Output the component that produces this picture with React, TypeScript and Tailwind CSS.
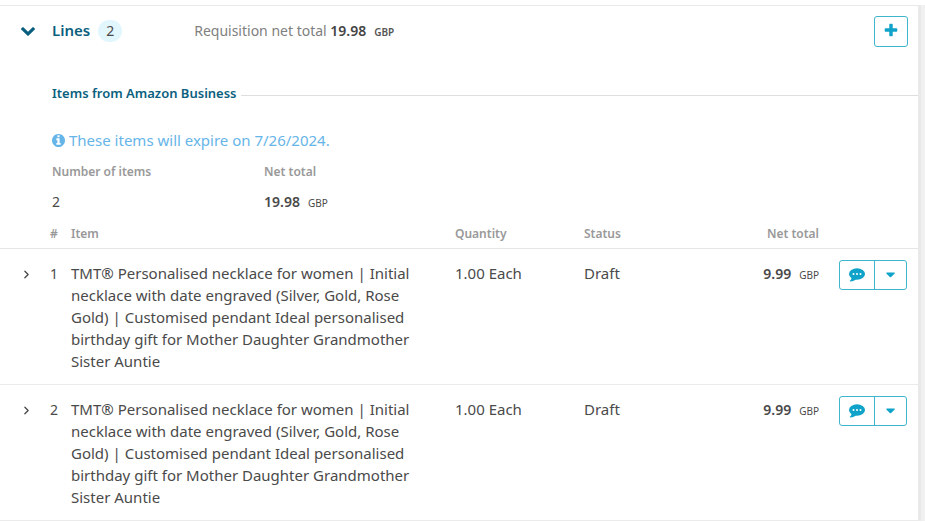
import { useState } from 'react';
import { ChevronRight } from 'lucide-react';

interface LineItem {
    id: number;
    name: string;
    quantity: string;
    status: string;
    netTotal: string;
}

const itemName =
    'TMT® Personalised necklace for women | Initial necklace with date engraved (Silver, Gold, Rose Gold) | Customised pendant Ideal personalised birthday gift for Mother Daughter Grandmother Sister Auntie';

const lines: LineItem[] = [
    { id: 1, name: itemName, quantity: '1.00 Each', status: 'Draft', netTotal: '9.99' },
    { id: 2, name: itemName, quantity: '1.00 Each', status: 'Draft', netTotal: '9.99' },
];

function ChevronDownIcon() {
    return (
        <svg width="14" height="9" viewBox="90 533 1612 1035" fill="currentColor" aria-hidden="true">
            <path d="M1683 808l-742 741q-19 19-45 19t-45-19l-742-741q-19-19-19-45.5t19-45.5l166-165q19-19 45-19t45 19l531 531 531-531q19-19 45-19t45 19l166 165q19 19 19 45.5t-19 45.5z" />
        </svg>
    );
}

function PlusIcon() {
    return (
        <svg width="16" height="16" viewBox="0 0 1792 1792" fill="currentColor" aria-hidden="true">
            <path d="M1600 800v192q0 40-28 68t-68 28h-416v416q0 40-28 68t-68 28h-192q-40 0-68-28t-28-68v-416h-416q-40 0-68-28t-28-68v-192q0-40 28-68t68-28h416v-416q0-40 28-68t68-28h192q40 0 68 28t28 68v416h416q40 0 68 28t28 68z" />
        </svg>
    );
}

function InfoIcon() {
    return (
        <svg width="13" height="13" viewBox="128 128 1536 1536" fill="currentColor" aria-hidden="true">
            <path d="M1152 1376v-160q0-14-9-23t-23-9h-96v-512q0-14-9-23t-23-9h-320q-14 0-23 9t-9 23v160q0 14 9 23t23 9h96v320h-96q-14 0-23 9t-9 23v160q0 14 9 23t23 9h448q14 0 23-9t9-23zm-128-896v-160q0-14-9-23t-23-9h-192q-14 0-23 9t-9 23v160q0 14 9 23t23 9h192q14 0 23-9t9-23zm640 416q0 209-103 385.5t-279.5 279.5-385.5 103-385.5-103-279.5-279.5-103-385.5 103-385.5 279.5-279.5 385.5-103 385.5 103 279.5 279.5 103 385.5z" />
        </svg>
    );
}

function CommentIcon() {
    return (
        <svg width="16" height="14" viewBox="0 0 16 14" fill="currentColor" aria-hidden="true">
            <ellipse cx="8" cy="6" rx="8" ry="5.8" />
            <path d="M2.6 9c0 1.800-.6 2.800-1.500 3.600-.4.4-.1.900.4.800 2.400-.2 4.300-1 5.900-2.400z" />
            <circle cx="4.5" cy="6" r="1" fill="white" />
            <circle cx="8" cy="6" r="1" fill="white" />
            <circle cx="11.5" cy="6" r="1" fill="white" />
        </svg>
    );
}

function CaretDownIcon() {
    return (
        <svg width="15" height="15" viewBox="0 0 1792 1792" fill="currentColor" aria-hidden="true">
            <path d="M1408 600q0 26-19 45l-448 448q-19 19-45 19t-45-19l-448-448q-19-19-19-45t19-45 45-19h896q26 0 45 19t19 45z" />
        </svg>
    );
}

function LineRow({ line }: { line: LineItem }) {
    return (
        <tr className="border-b border-[#ebebeb] align-top text-[15px]">
            <td className="pt-[14px] pb-[11px] pl-5">
                <button type="button" aria-label={`Expand line ${line.id}`} className="flex h-[22px] items-center text-[#4a4a4a]">
                    <ChevronRight size={13} strokeWidth={2.5} />
                </button>
            </td>
            <td className="pt-[14px] pb-[11px] text-[14px]">{line.id}</td>
            <td className="pt-[13px] pb-3">
                <div className="max-w-[345px]">{line.name}</div>
            </td>
            <td className="pt-[13px] pb-3">{line.quantity}</td>
            <td className="pt-[13px] pb-3">{line.status}</td>
            <td className="pt-[14px] pb-[11px] text-right text-[14px]">
                <span className="font-semibold">{line.netTotal}</span>
                <span className="ml-2 text-[10px]">GBP</span>
            </td>
            <td className="pt-[11px] pr-[11px]">
                <div className="ml-auto flex h-[30px] w-[68px] rounded-[3px] border border-[#3fb5ce] text-[#10a3c9]">
                    <button type="button" aria-label="Comments" className="flex w-[35px] items-center justify-center border-r border-[#3fb5ce]">
                        <CommentIcon />
                    </button>
                    <button type="button" aria-label="More actions" className="flex flex-1 items-center justify-center">
                        <CaretDownIcon />
                    </button>
                </div>
            </td>
        </tr>
    );
}

function App() {
    const [open, setOpen] = useState(true);

    return (
        <div className="bg-white pt-[5px] font-['Noto_Sans','Open_Sans',sans-serif] text-[14px] leading-[22px] text-[#4a4a4a]">
            <div className="bg-[#f1f1f1] pr-1">
                <section className="border-t border-r-[3px] border-t-[#e9e9e9] border-r-[#e9e9e9] bg-white">
                    <header className="flex items-start pt-[10px] pr-[10px] pl-[21px]">
                        <div className="flex h-[30px] flex-1 items-center">
                            <button
                                type="button"
                                aria-label="Toggle lines"
                                aria-expanded={open}
                                onClick={() => setOpen(!open)}
                                className="w-[31px] text-[#0b5f7e]"
                            >
                                <ChevronDownIcon />
                            </button>
                            <h1 className="pb-[2px] text-[15px] font-semibold text-[#0b5f7e]">Lines</h1>
                            <span className="ml-2 flex h-[22px] w-6 items-center justify-center rounded-full bg-[#e2f6fd] text-[14px]">2</span>
                            <p className="ml-[72px] text-[#808080]">
                                Requisition net total <span className="font-semibold text-[#444]">19.98</span>
                                <span className="ml-2 text-[10px] font-semibold text-[#555]">GBP</span>
                            </p>
                        </div>
                        <button
                            type="button"
                            aria-label="Add line"
                            className="flex h-[31px] w-[34px] items-center justify-center rounded-[3px] border border-[#3fb5ce] pb-[3px] text-[#10a3c9]"
                        >
                            <PlusIcon />
                        </button>
                    </header>

                    {open && (
                        <>
                            <div className="mt-[35px] ml-[52px] flex items-center gap-1">
                                <h2 className="text-[13px] font-semibold text-[#0b5f7e]">Items from Amazon Business</h2>
                                <div className="mt-1 h-px flex-1 bg-[#dedede]" />
                            </div>

                            <p className="mt-[25px] ml-[52px] flex items-center gap-1 text-[15px] text-[#66b5e8]">
                                <InfoIcon />
                                These items will expire on 7/26/2024.
                            </p>

                            <dl className="mt-[10px] ml-[52px] flex">
                                <div className="w-[212px]">
                                    <dt className="text-[12px] font-semibold text-[#999]">Number of items</dt>
                                    <dd className="mt-2">2</dd>
                                </div>
                                <div>
                                    <dt className="text-[12px] font-semibold text-[#999]">Net total</dt>
                                    <dd className="mt-2">
                                        <span className="font-semibold">19.98</span>
                                        <span className="ml-2 text-[10px]">GBP</span>
                                    </dd>
                                </div>
                            </dl>

                            <table className="mt-[9px] w-full table-fixed border-collapse">
                                <thead>
                                    <tr className="border-b border-[#e6e6e6] text-left text-[12px] text-[#999]">
                                        <th className="w-[50px]" aria-label="Expand" />
                                        <th className="w-[21px] pb-[3px] font-semibold">#</th>
                                        <th className="pb-[3px] font-semibold">Item</th>
                                        <th className="w-[129px] pb-[3px] font-semibold">Quantity</th>
                                        <th className="w-[110px] pb-[3px] font-semibold">Status</th>
                                        <th className="w-[125px] pb-[3px] text-right font-semibold">Net total</th>
                                        <th className="w-[99px]" aria-label="Actions" />
                                    </tr>
                                </thead>
                                <tbody>
                                    {lines.map((line) => (
                                        <LineRow key={line.id} line={line} />
                                    ))}
                                </tbody>
                            </table>
                        </>
                    )}
                </section>
            </div>
        </div>
    );
}

export default App;
